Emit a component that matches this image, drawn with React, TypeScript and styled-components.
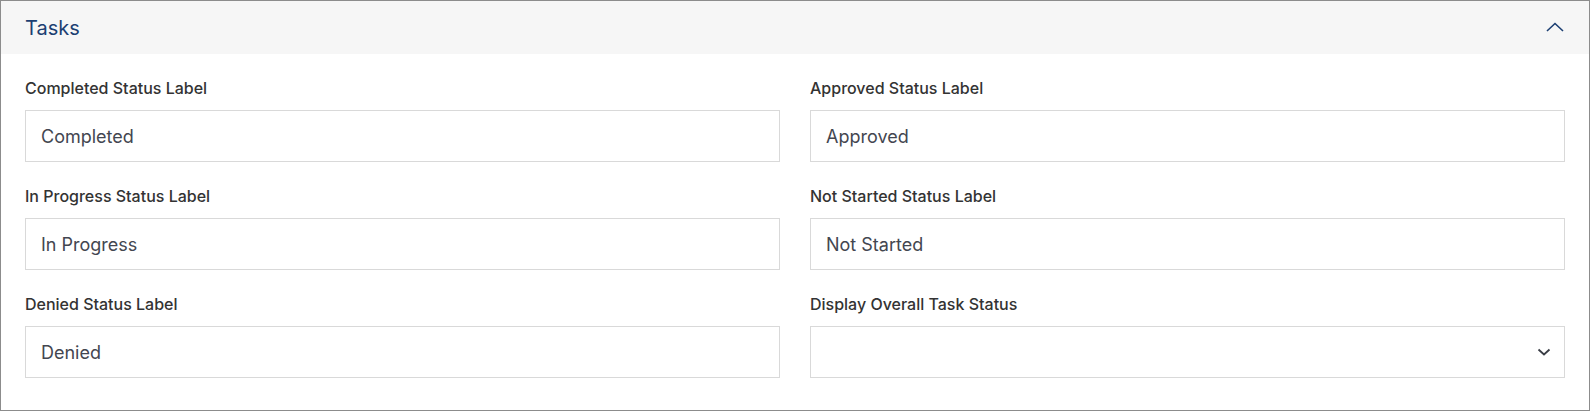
import React from "react";
import styled, { createGlobalStyle } from "styled-components";

const Global = createGlobalStyle`
  html, body { margin: 0; padding: 0; background: #fff; }
  body { font-family: Inter, "Noto Sans", sans-serif; }
  * { box-sizing: border-box; }
`;

const Panel = styled.section`
  width: 1590px;
  height: 411px;
  border: 1px solid #8c8c8c;
  background: #fff;
  display: flex;
  flex-direction: column;
`;

const Header = styled.header`
  height: 53px;
  background: #f6f6f6;
  display: flex;
  align-items: center;
  justify-content: space-between;
  padding: 0 24px 0 24px;
`;

const Title = styled.h2`
  margin: 0;
  font-size: 20px;
  font-weight: 400;
  color: #1c3f72;
  letter-spacing: 0;
`;

const Toggle = styled.button`
  border: 0;
  background: transparent;
  padding: 0;
  width: 20px;
  height: 20px;
  display: flex;
  align-items: center;
  justify-content: center;
  color: #1c3f72;
  margin-top: -1px;
`;

const Body = styled.div`
  padding: 24px 24px 32px 24px;
  display: grid;
  grid-template-columns: 1fr 1fr;
  column-gap: 30px;
  row-gap: 24px;
`;

const Field = styled.div`
  display: flex;
  flex-direction: column;
  gap: 12px;
`;

const Label = styled.label`
  font-size: 16px;
  line-height: 20px;
  font-weight: 500;
  color: #333333;
`;

const InputBox = styled.div`
  height: 52px;
  border: 1px solid #d9d9d9;
  display: flex;
  align-items: center;
  justify-content: space-between;
  padding: 0 13px 0 15px;
  font-size: 18px;
  color: #434650;
`;

const fields: { label: string; value?: string; select?: boolean }[] = [
  { label: "Completed Status Label", value: "Completed" },
  { label: "Approved Status Label", value: "Approved" },
  { label: "In Progress Status Label", value: "In Progress" },
  { label: "Not Started Status Label", value: "Not Started" },
  { label: "Denied Status Label", value: "Denied" },
  { label: "Display Overall Task Status", select: true },
];

export default function App() {
  return (
    <>
      <Global />
      <Panel>
        <Header>
          <Title>Tasks</Title>
          <Toggle aria-label="collapse">
            <svg width="18" height="10" viewBox="0 0 18 10" fill="none">
              <path d="M1 9L9 1.5L17 9" stroke="#1c3f72" strokeWidth="1.6" />
            </svg>
          </Toggle>
        </Header>
        <Body>
          {fields.map((f) => (
            <Field key={f.label}>
              <Label>{f.label}</Label>
              <InputBox>
                <span>{f.value ?? ""}</span>
                {f.select && (
                  <svg width="14" height="8" viewBox="0 0 14 8" fill="none">
                    <path d="M1.5 1.5L7 6.5L12.5 1.5" stroke="#3a3d45" strokeWidth="1.8" />
                  </svg>
                )}
              </InputBox>
            </Field>
          ))}
        </Body>
      </Panel>
    </>
  );
}
